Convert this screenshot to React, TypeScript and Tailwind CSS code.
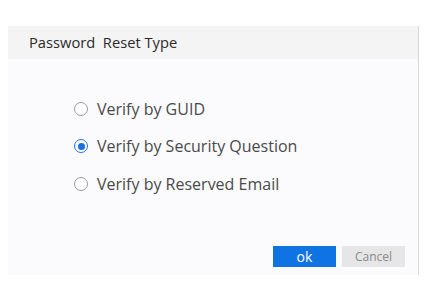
import { useState } from 'react';

const options = [
  { id: 'guid', label: 'Verify by GUID' },
  { id: 'question', label: 'Verify by Security Question' },
  { id: 'email', label: 'Verify by Reserved Email' },
];

export default function App() {
  const [selected, setSelected] = useState('question');

  return (
    <div className="w-[433px] h-[288px] bg-white pt-[26px] pl-[8px]" style={{ fontFamily: '"Open Sans", "Noto Sans", sans-serif' }}>
      <div className="w-[411px] h-[249px] bg-[#fbfbfd] border-r border-[#d9d9d9] flex flex-col">
        <div className="h-[33px] bg-[#f4f4f4] flex items-center pl-[21px] text-[14.7px] text-[#2b2b2b] whitespace-pre">
          Password  Reset Type
        </div>
        <div className="flex flex-col gap-[15.5px] pt-[38.5px] pl-[66px]">
          {options.map((o) => {
            const on = selected === o.id;
            return (
              <label key={o.id} className="h-[22px] flex items-center gap-[9px] cursor-pointer" onClick={() => setSelected(o.id)}>
                <span
                  className={
                    on
                      ? 'w-[14px] h-[14px] rounded-full border border-[#1a73e8] flex items-center justify-center bg-white'
                      : 'w-[14px] h-[14px] rounded-full border border-[#9a9a9a] bg-white'
                  }
                >
                  {on && <span className="w-[7px] h-[7px] rounded-full bg-[#1a6fe0]" />}
                </span>
                <span className="text-[16px] text-[#4a4a4a]">{o.label}</span>
              </label>
            );
          })}
        </div>
        <div className="flex justify-end gap-[6px] pr-[13px] mt-auto mb-[8px]">
          <button className="w-[63px] h-[21px] bg-[#0f73e3] text-white text-[14px] leading-none">ok</button>
          <button className="w-[63px] h-[21px] bg-[#e6e6e6] text-[#8a8a8a] text-[12px] leading-none">Cancel</button>
        </div>
      </div>
    </div>
  );
}
